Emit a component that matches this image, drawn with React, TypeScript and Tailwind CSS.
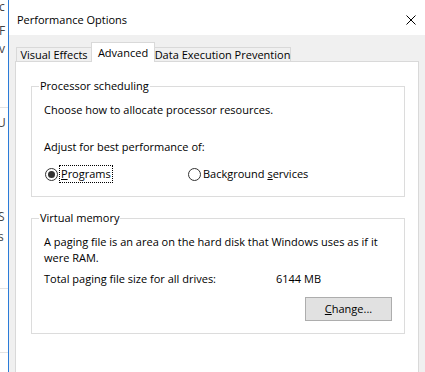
import React from 'react';

// a radio button drawn like the Windows 10 one
function Radio({ checked }: { checked?: boolean }) {
  return (
    <span className="w-[13px] h-[13px] rounded-full border border-[#333333] bg-white flex items-center justify-center shrink-0">
      {checked && <span className="w-[7px] h-[7px] rounded-full bg-[#333333]" />}
    </span>
  );
}

function GroupBox({ title, className, children }: { title: string; className?: string; children: React.ReactNode }) {
  return (
    <fieldset className={`ml-[15px] w-[374px] border border-[#dcdcdc] ${className ?? ''}`}>
      <legend className="ml-[7px] px-[1px] leading-[16px]">{title}</legend>
      {children}
    </fieldset>
  );
}

export default function App() {
  return (
    <div className="w-[425px] h-[372px] overflow-hidden flex items-start bg-white text-black text-[11px] font-['Open_Sans',sans-serif]">
      {/* window behind the dialog, only a sliver of it shows */}
      <div className="w-[8px] h-[372px] shrink-0 overflow-hidden flex flex-col text-[12px] leading-[12px] text-[#444]">
        <div className="mt-[1px] -ml-[1px]">c</div>
        <div className="mt-[12px] -ml-[1px]">F</div>
        <div className="mt-[6px] -ml-[1px]">v</div>
        <div className="mt-[52px] h-px shrink-0 bg-[#e3e3e3]" />
        <div className="mt-[9px] -ml-[3px]">U</div>
        <div className="mt-[8px] -ml-[4px] font-bold">I</div>
        <div className="mt-[62px] -ml-[2px]">S</div>
        <div className="mt-[8px] -ml-[2px]">s</div>
        <div className="mt-[45px] h-px shrink-0 bg-[#e3e3e3]" />
        <div className="mt-[63px] h-px shrink-0 bg-[#e3e3e3]" />
      </div>
      <div className="w-px h-[372px] shrink-0 bg-[#2b7bd8]" />

      <div className="flex-1 flex flex-col bg-[#f0f0f0]">
        {/* title bar */}
        <div className="h-[35px] shrink-0 bg-white flex items-start justify-between pl-[8px] pr-[9px] pt-[12px]">
          <span className="text-[11px] leading-[16px]">Performance Options</span>
          <svg width="10" height="10" viewBox="0 0 10 10" className="mt-[3px]">
            <path d="M0.5 0.5 L9.5 9.5 M9.5 0.5 L0.5 9.5" stroke="#000" strokeWidth="1" />
          </svg>
        </div>

        <div className="shrink-0 px-[6px] pt-[7px]">
          {/* tabs */}
          <div className="flex items-end h-[19px] pl-[1px] whitespace-nowrap">
            <div className="w-[75px] h-[14px] border-t border-l border-[#d9d9d9] flex items-center justify-center leading-[14px]">
              Visual Effects
            </div>
            <div className="w-[64px] h-[20px] -mb-px relative z-10 bg-white border-t border-l border-r border-[#d9d9d9] flex items-center justify-center leading-[16px]">
              Advanced
            </div>
            <div className="w-[136px] h-[14px] border-t border-r border-[#d9d9d9] flex items-center justify-center leading-[14px]">
              Data Execution Prevention
            </div>
          </div>

          {/* tab page */}
          <div className="h-[330px] bg-white border border-[#d9d9d9] pt-[16px]">
            <GroupBox title="Processor scheduling">
              <div className="px-[12px] pt-[8px] pb-[13px] leading-[16px]">
                <div>Choose how to allocate processor resources.</div>
                <div className="mt-[21px]">Adjust for best performance of:</div>
                <div className="mt-[10px] flex items-center h-[18px]">
                  <div className="w-[144px] flex items-center">
                    <span className="ml-[1px]"><Radio checked /></span>
                    <span className="ml-[1px] h-[18px] px-[1px] border border-dotted border-black flex items-center">
                      <span><span className="underline">P</span>rograms</span>
                    </span>
                  </div>
                  <div className="flex items-center">
                    <Radio />
                    <span className="ml-[2px]">Background <span className="underline">s</span>ervices</span>
                  </div>
                </div>
              </div>
            </GroupBox>

            <GroupBox title="Virtual memory" className="mt-[13px]">
              <div className="px-[12px] pt-[8px] pb-[12px] leading-[16px]">
                <div className="whitespace-nowrap">
                  A paging file is an area on the hard disk that Windows uses as if it
                  <br />
                  were RAM.
                </div>
                <div className="mt-[5px] flex">
                  <span className="w-[232px]">Total paging file size for all drives:</span>
                  <span>6144 MB</span>
                </div>
                <div className="mt-[10px] flex justify-end">
                  <button className="w-[87px] h-[24px] bg-[#e1e1e1] border border-[#adadad] flex items-center justify-center leading-[16px]">
                    <span><span className="underline">C</span>hange...</span>
                  </button>
                </div>
              </div>
            </GroupBox>
          </div>
        </div>
      </div>
    </div>
  );
}
